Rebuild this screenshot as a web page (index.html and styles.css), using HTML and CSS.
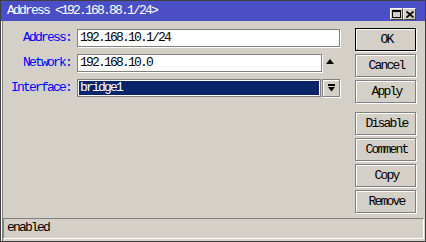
FILE: index.html
```html
<!DOCTYPE html>
<html lang="en">
<head>
    <meta charset="UTF-8">
    <title>Address</title>
    <link rel="stylesheet" href="styles.css">
</head>
<body>
    <div class="window">
        <div class="titlebar">
            <span class="title">Address &lt;192.168.88.1/24&gt;</span>
            <div class="title-btns">
                <span class="tbtn">
                    <svg width="9" height="8" viewBox="0 0 9 8"><rect x="0.5" y="0.5" width="8" height="7" fill="none" stroke="#000"/><rect x="0" y="0" width="9" height="2" fill="#000"/></svg>
                </span>
                <span class="tbtn">
                    <svg width="8" height="7" viewBox="0 0 8 7"><path d="M0.5 0.5 L7.5 6.5 M7.5 0.5 L0.5 6.5" stroke="#000" stroke-width="1.8"/></svg>
                </span>
            </div>
        </div>

        <div class="main">
            <div class="form">
                <label class="lbl">Address:</label>
                <div class="field"><div class="input wide">192.168.10.1/24</div></div>

                <label class="lbl">Network:</label>
                <div class="field"><div class="input mid">192.168.10.0</div><span class="up-arrow"></span></div>

                <label class="lbl">Interface:</label>
                <div class="field">
                    <div class="select">bridge1</div>
                    <span class="drop-btn">
                        <svg width="7" height="8" viewBox="0 0 7 8"><rect x="0" y="0" width="7" height="2" fill="#000"/><polygon points="0,3 7,3 3.5,7.5" fill="#000"/></svg>
                    </span>
                </div>
            </div>

            <div class="buttons">
                <button class="btn default">OK</button>
                <button class="btn">Cancel</button>
                <button class="btn">Apply</button>
                <button class="btn spaced">Disable</button>
                <button class="btn">Comment</button>
                <button class="btn">Copy</button>
                <button class="btn">Remove</button>
            </div>
        </div>

        <div class="statusbar">enabled</div>
    </div>
</body>
</html>
```

FILE: styles.css
```css
* {
    box-sizing: border-box;
}
body {
    margin: 0;
    font-family: "Liberation Mono", monospace;
    font-size: 13px;
    letter-spacing: -1.8px;
    line-height: 16px;
}
.window {
    width: 426px;
    height: 242px;
    background: #d4d0c8;
    border: 1px solid #404040;
    box-shadow: inset 1px 0 #fff, inset 2px 0 #808080;
    display: flex;
    flex-direction: column;
}
.titlebar {
    height: 20px;
    background: #4b4fc6;
    color: #fff;
    display: flex;
    align-items: flex-end;
    justify-content: space-between;
    padding: 0 9px 1px 6px;
}
.title {
    line-height: 16px;
    margin-bottom: 1px;
}
.title-btns {
    display: flex;
}
.tbtn {
    width: 13px;
    height: 12px;
    background: #d4d0c8;
    border: 1px solid;
    border-color: #fff #404040 #404040 #fff;
    display: flex;
    align-items: center;
    justify-content: center;
}
.main {
    display: flex;
    gap: 15px;
    padding-right: 9px;
}
.form {
    flex: 1;
    padding-top: 8px;
    display: grid;
    grid-template-columns: 68px 1fr;
    grid-auto-rows: 18px;
    column-gap: 8px;
    row-gap: 7px;
    align-content: start;
}
.lbl {
    color: #0000ff;
    text-align: right;
    line-height: 18px;
    margin-right: -2px;
}
.field {
    display: flex;
    align-items: center;
}
.input {
    height: 18px;
    background: #fff;
    border: 1px solid #808080;
    box-shadow: 1px 1px #fff;
    padding-left: 2px;
    line-height: 16px;
    color: #000;
}
.wide {
    width: 263px;
}
.mid {
    width: 245px;
}
.up-arrow {
    width: 0;
    height: 0;
    margin-left: 4px;
    margin-top: -4px;
    border-left: 4.5px solid transparent;
    border-right: 4.5px solid transparent;
    border-bottom: 5px solid #000;
}
.select {
    width: 244px;
    height: 18px;
    background: #0a246a;
    color: #fff;
    border: 1px solid #808080;
    box-shadow: inset 0 0 0 1px #fff;
    padding-left: 2px;
    line-height: 16px;
}
.drop-btn {
    width: 18px;
    height: 18px;
    margin-left: 1px;
    border: 1px solid #808080;
    box-shadow: inset 1px 1px #fff, 1px 1px #fff;
    display: flex;
    align-items: center;
    justify-content: center;
}
.buttons {
    width: 61px;
    margin-top: 7px;
    display: flex;
    flex-direction: column;
    gap: 3px;
}
.btn {
    height: 23px;
    padding: 0;
    background: #d4d0c8;
    border: 1px solid #808080;
    box-shadow: inset 1px 1px #fff, 1px 1px #fff;
    font-family: inherit;
    font-size: 13px;
    letter-spacing: -1.8px;
    color: #000;
    text-indent: 2px;
}
.btn.default {
    border-color: #000;
}
.btn.spaced {
    margin-top: 6px;
}
.statusbar {
    margin: auto 1px 2px 2px;
    height: 21px;
    border: 1px solid;
    border-color: #808080 #fff #fff #808080;
    padding-left: 3px;
    line-height: 18px;
}
```
